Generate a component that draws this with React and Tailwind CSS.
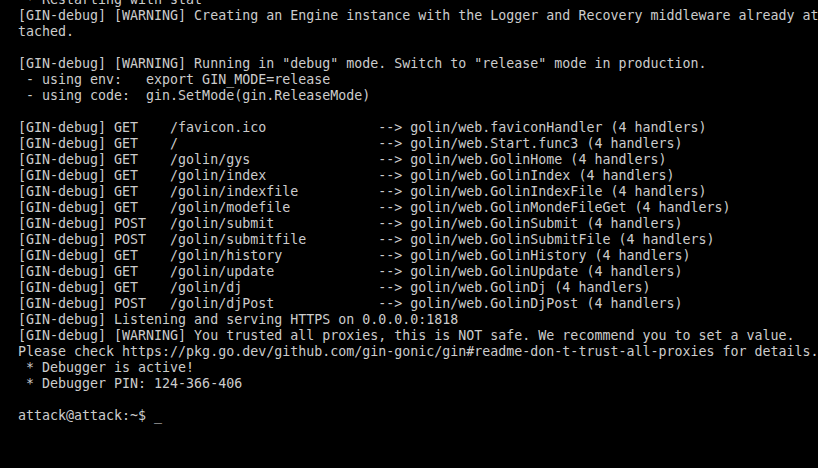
import React from 'react';

const routes = [
  ['GET', '/favicon.ico', 'golin/web.faviconHandler'],
  ['GET', '/', 'golin/web.Start.func3'],
  ['GET', '/golin/gys', 'golin/web.GolinHome'],
  ['GET', '/golin/index', 'golin/web.GolinIndex'],
  ['GET', '/golin/indexfile', 'golin/web.GolinIndexFile'],
  ['GET', '/golin/modefile', 'golin/web.GolinMondeFileGet'],
  ['POST', '/golin/submit', 'golin/web.GolinSubmit'],
  ['POST', '/golin/submitfile', 'golin/web.GolinSubmitFile'],
  ['GET', '/golin/history', 'golin/web.GolinHistory'],
  ['GET', '/golin/update', 'golin/web.GolinUpdate'],
  ['GET', '/golin/dj', 'golin/web.GolinDj'],
  ['POST', '/golin/djPost', 'golin/web.GolinDjPost'],
];

const lines = [
  ' * Restarting with stat',
  '[GIN-debug] [WARNING] Creating an Engine instance with the Logger and Recovery middleware already at',
  'tached.',
  '',
  '[GIN-debug] [WARNING] Running in "debug" mode. Switch to "release" mode in production.',
  ' - using env:   export GIN_MODE=release',
  ' - using code:  gin.SetMode(gin.ReleaseMode)',
  '',
  ...routes.map(
    ([m, p, h]) => `[GIN-debug] ${m.padEnd(6)} ${p.padEnd(25)} --> ${h} (4 handlers)`
  ),
  '[GIN-debug] Listening and serving HTTPS on 0.0.0.0:1818',
  '[GIN-debug] [WARNING] You trusted all proxies, this is NOT safe. We recommend you to set a value.',
  'Please check https://pkg.go.dev/github.com/gin-gonic/gin#readme-don-t-trust-all-proxies for details.',
  ' * Debugger is active!',
  ' * Debugger PIN: 124-366-406',
  '',
  'attack@attack:~$ _',
];

export default function App() {
  return (
    <div className="w-screen h-screen bg-black overflow-hidden">
      <div
        className="-mt-[8px] pl-[18px] text-[#cccccc] text-[13.3px] leading-[16px] whitespace-pre"
        style={{ fontFamily: '"DejaVu Sans Mono", "Liberation Mono", monospace' }}
      >
        {lines.map((l, i) => (
          <div key={i} className="h-[16px]">{l}</div>
        ))}
      </div>
    </div>
  );
}
